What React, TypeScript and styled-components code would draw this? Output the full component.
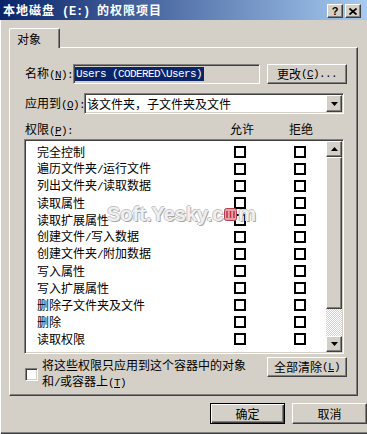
import React from "react";
import styled, { createGlobalStyle, css } from "styled-components";

const Global = createGlobalStyle`
  html, body { margin: 0; padding: 0; background: #D4D0C8; }
  body { font-family: "Noto Sans CJK SC", "Noto Sans", sans-serif; font-size: 12px; color: #000; }
  * { box-sizing: border-box; }
`;

const raised = css`
  border: 1px solid;
  border-color: #fff #404040 #404040 #fff;
  box-shadow: inset -1px -1px #808080, inset 1px 1px #D4D0C8;
  background: #D4D0C8;
`;

const sunken = css`
  border: 1px solid;
  border-color: #808080 #fff #fff #808080;
  box-shadow: inset 1px 1px #404040, inset -1px -1px #D4D0C8;
`;

const Window = styled.div`
  position: relative;
  width: 367px;
  height: 434px;
  background: #D4D0C8;
  overflow: hidden;
  box-shadow: inset 1px 0 #fff, inset 0 -1px #404040, inset 0 -2px #808080;
`;

const TitleBar = styled.div`
  height: 20px;
  padding: 2px 6px 0 3px;
  display: flex;
  align-items: center;
  justify-content: space-between;
  background: linear-gradient(to right, #0a246a, #a6caf0);
`;

const Title = styled.div`
  color: #fff;
  font-weight: bold;
  font-size: 12px;
  letter-spacing: 1px;
  line-height: 18px;
  white-space: pre;
`;

const TitleHalf = styled.span`
  font-family: "Liberation Mono", monospace;
  font-size: 12px;
  letter-spacing: -0.2px;
  font-weight: bold;
`;

const TitleButtons = styled.div`
  display: flex;
  gap: 2px;
`;

const TBtn = styled.div`
  ${raised};
  width: 16px;
  height: 14px;
  display: flex;
  align-items: center;
  justify-content: center;
  font-family: "Liberation Sans", Arial, sans-serif;
  font-weight: bold;
  font-size: 11px;
  line-height: 1;
  color: #000;
`;

const Half = styled.span`
  font-family: "Liberation Mono", monospace;
  font-size: 11px;
  letter-spacing: -0.6px;
`;

const Body = styled.div`
  padding: 8px 0 0 9px;
`;

const TabStrip = styled.div`
  display: flex;
  position: relative;
  z-index: 1;
`;

const Tab = styled.div`
  width: 51px;
  height: 20px;
  margin-bottom: -1px;
  padding: 0 0 0 7px;
  border-top: 1px solid #fff;
  border-left: 1px solid #fff;
  border-right: 1px solid #404040;
  box-shadow: inset -1px 0 #808080;
  border-radius: 2px 2px 0 0;
  background: #D4D0C8;
  line-height: 19px;
`;

const Panel = styled.div`
  width: 349px;
  height: 349px;
  border: 1px solid;
  border-color: #fff #404040 #404040 #fff;
  box-shadow: inset -1px -1px #808080;
  padding: 16px 0 0 15px;
`;

const FieldRow = styled.div<{ $gap?: number }>`
  display: flex;
  align-items: center;
  margin-top: ${(p) => p.$gap ?? 0}px;
`;

const Label = styled.div<{ $w: number }>`
  width: ${(p) => p.$w}px;
  flex: none;
  white-space: nowrap;
  line-height: 14px;
`;

const NameField = styled.div`
  ${sunken};
  width: 187px;
  height: 20px;
  background: #D4D0C8;
  padding: 2px 1px;
  display: flex;
  align-items: center;
`;

const Selected = styled.span`
  background: #0a246a;
  color: #fff;
  font-family: "Liberation Mono", monospace;
  font-size: 11px;
  letter-spacing: -0.6px;
  line-height: 14px;
  padding: 0 2px 0 1px;
  white-space: pre;
`;

const Button = styled.div<{ $w: number; $h?: number; $default?: boolean; $ml?: number }>`
  ${raised};
  width: ${(p) => p.$w}px;
  height: ${(p) => p.$h ?? 20}px;
  margin-left: ${(p) => p.$ml ?? 0}px;
  flex: none;
  display: flex;
  align-items: center;
  justify-content: center;
  line-height: 14px;
  white-space: nowrap;
  ${(p) =>
    p.$default &&
    css`
      border: 1px solid #000;
      box-shadow: inset 1px 1px #fff, inset -1px -1px #404040, inset -2px -2px #808080;
    `}
`;

const Combo = styled.div`
  ${sunken};
  width: 260px;
  height: 21px;
  background: #fff;
  display: flex;
  align-items: center;
  padding: 1px 1px 1px 2px;
`;

const ComboText = styled.div`
  flex: 1;
  line-height: 14px;
  white-space: nowrap;
`;

const ArrowBtn = styled.div<{ $h?: number }>`
  ${raised};
  width: 16px;
  height: ${(p) => p.$h ?? 16}px;
  flex: none;
  display: flex;
  align-items: center;
  justify-content: center;
`;

const Header = styled.div`
  margin-top: 8px;
  display: grid;
  grid-template-columns: 205px 59px auto;
  line-height: 14px;
  white-space: nowrap;
`;

const ListBox = styled.div`
  ${sunken};
  margin: 1px 0 0 -1px;
  width: 320px;
  height: 215px;
  background: #fff;
  display: flex;
  padding: 1px;
`;

const Rows = styled.div`
  flex: 1;
  padding-top: 2px;
`;

const PermRow = styled.div`
  display: grid;
  grid-template-columns: 197px 12px 48px 12px;
  align-items: center;
  height: 17px;
  padding-left: 11px;
  line-height: 14px;
  white-space: nowrap;
`;

const Box = styled.div`
  width: 12px;
  height: 12px;
  border: 2px solid #000;
  background: #fff;
`;

const ScrollBar = styled.div`
  width: 16px;
  display: flex;
  flex-direction: column;
`;

const Thumb = styled.div`
  ${raised};
  height: 152px;
`;

const Track = styled.div`
  flex: 1;
  background: repeating-conic-gradient(#fff 0 25%, #d4d0c8 0 50%) 0 0 / 2px 2px;
`;

const BottomRow = styled.div`
  margin-top: 3px;
  width: 322px;
  display: flex;
  justify-content: space-between;
  align-items: flex-start;
`;

const CheckGroup = styled.div`
  display: flex;
  align-items: center;
`;

const CheckBox = styled.div`
  ${sunken};
  width: 13px;
  height: 13px;
  background: #fff;
  flex: none;
`;

const CheckText = styled.div`
  margin-left: 4px;
  line-height: 16px;
  white-space: nowrap;
`;

const Footer = styled.div`
  margin-top: 7px;
  display: flex;
  justify-content: flex-end;
  gap: 7px;
`;

const Watermark = styled.div`
  position: absolute;
  left: 107px;
  top: 203px;
  font-family: "Liberation Sans", Arial, sans-serif;
  font-weight: bold;
  font-size: 20px;
  line-height: 22px;
  color: #f0f0f0;
  text-shadow: 1px 1px 0 #a8a8a8, -1px 0 0 #c4c4c4, 0 -1px 0 #c4c4c4;
  display: flex;
  align-items: center;
  white-space: nowrap;
  pointer-events: none;
`;

const Down = () => (
  <svg width="7" height="4" viewBox="0 0 7 4">
    <polygon points="0,0 7,0 3.5,4" fill="#000" />
  </svg>
);

const Up = () => (
  <svg width="7" height="4" viewBox="0 0 7 4">
    <polygon points="0,4 7,4 3.5,0" fill="#000" />
  </svg>
);

const perms = [
  "完全控制",
  "遍历文件夹/运行文件",
  "列出文件夹/读取数据",
  "读取属性",
  "读取扩展属性",
  "创建文件/写入数据",
  "创建文件夹/附加数据",
  "写入属性",
  "写入扩展属性",
  "删除子文件夹及文件",
  "删除",
  "读取权限",
];

const withHalf = (s: string) => {
  const parts = s.split("/");
  return parts.map((p, i) => (
    <React.Fragment key={i}>
      {p}
      {i < parts.length - 1 && <Half>/</Half>}
    </React.Fragment>
  ));
};

export default function App() {
  return (
    <Window>
      <Global />
      <TitleBar>
        <Title>
          本地磁盘<TitleHalf> (E:) </TitleHalf>的权限项目
        </Title>
        <TitleButtons>
          <TBtn>?</TBtn>
          <TBtn>
            <svg width="8" height="7" viewBox="0 0 8 7">
              <path d="M0.5 0.5 L7.5 6.5 M7.5 0.5 L0.5 6.5" stroke="#000" strokeWidth="1.7" />
            </svg>
          </TBtn>
        </TitleButtons>
      </TitleBar>
      <Body>
        <TabStrip>
          <Tab>对象</Tab>
        </TabStrip>
        <Panel>
          <FieldRow>
            <Label $w={48}>
              名称<Half>(<u>N</u>):</Half>
            </Label>
            <NameField>
              <Selected>{"Users (CODERED\\Users)"}</Selected>
            </NameField>
            <Button $w={80} $ml={7}>
              更改<Half>(<u>C</u>)...</Half>
            </Button>
          </FieldRow>
          <FieldRow $gap={9}>
            <Label $w={59}>
              应用到<Half>(<u>O</u>):</Half>
            </Label>
            <Combo>
              <ComboText>该文件夹，子文件夹及文件</ComboText>
              <ArrowBtn $h={17}>
                <Down />
              </ArrowBtn>
            </Combo>
          </FieldRow>
          <Header>
            <div>
              权限<Half>(<u>P</u>):</Half>
            </div>
            <div>允许</div>
            <div>拒绝</div>
          </Header>
          <ListBox>
            <Rows>
              {perms.map((p) => (
                <PermRow key={p}>
                  <div>{withHalf(p)}</div>
                  <Box />
                  <div />
                  <Box />
                </PermRow>
              ))}
            </Rows>
            <ScrollBar>
              <ArrowBtn>
                <Up />
              </ArrowBtn>
              <Thumb />
              <Track />
              <ArrowBtn>
                <Down />
              </ArrowBtn>
            </ScrollBar>
          </ListBox>
          <BottomRow>
            <CheckGroup>
              <CheckBox />
              <CheckText>
                将这些权限只应用到这个容器中的对象
                <br />和<Half>/</Half>或容器上<Half>(<u>T</u>)</Half>
              </CheckText>
            </CheckGroup>
            <Button $w={80}>
              全部清除<Half>(<u>L</u>)</Half>
            </Button>
          </BottomRow>
        </Panel>
        <Footer>
          <Button $w={75} $h={21} $default>
            确定
          </Button>
          <Button $w={75} $h={21}>
            取消
          </Button>
        </Footer>
      </Body>
      <Watermark>
        Soft.Yesky.c
        <svg width="13" height="13" viewBox="0 0 13 13" style={{ margin: "0 1px" }}>
          <rect x="0.5" y="0.5" width="12" height="12" rx="2" fill="#e8a0a8" stroke="#b04050" />
          <path d="M3 3 V10 M6.5 3 V10 M10 3 V10" stroke="#c03040" strokeWidth="1.5" />
        </svg>
        m
      </Watermark>
    </Window>
  );
}
